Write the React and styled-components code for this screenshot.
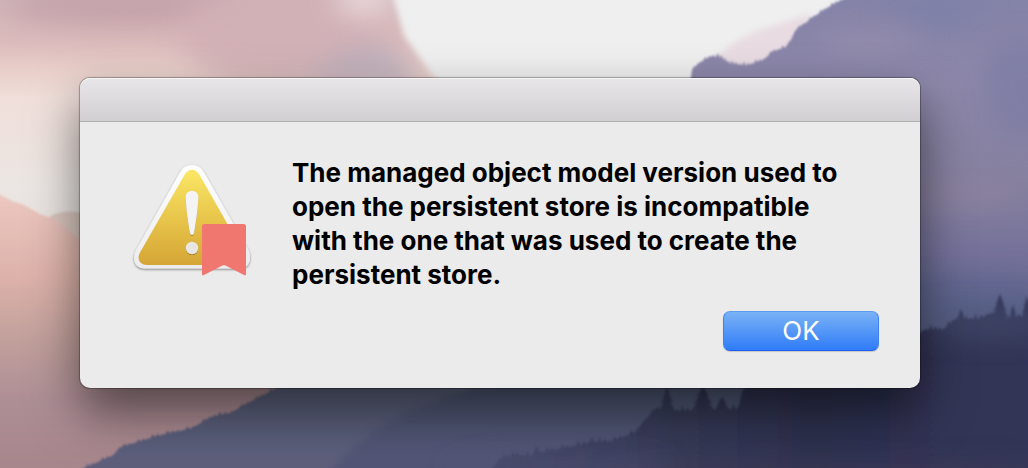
import React from 'react';
import styled, { createGlobalStyle } from 'styled-components';

const GlobalStyle = createGlobalStyle`
  * {
    box-sizing: border-box;
  }

  body {
    margin: 0;
    font-family: Inter, "Liberation Sans", sans-serif;
    background: #8d7f98;
  }
`;

const Desktop = styled.main`
  position: relative;
  min-height: 100vh;
  padding: 78px 108px 80px 80px;
  overflow: hidden;
`;

const WallpaperSvg = styled.svg`
  position: absolute;
  inset: 0;
  width: 100%;
  height: 100%;
`;

const Dialog = styled.section`
  position: relative;
  background: #ebebeb;
  border-radius: 10px;
  box-shadow:
    0 0 1px 1px rgba(0, 0, 0, 0.3),
    0 24px 50px rgba(0, 0, 0, 0.54);
`;

const TitleBar = styled.header`
  height: 44px;
  border-radius: 10px 10px 0 0;
  border-bottom: 1px solid #b1afb1;
  background: linear-gradient(#e8e6e8, #d1cfd1);
  box-shadow: inset 0 1px 0 #f6f5f6;
`;

const DialogBody = styled.div`
  display: flex;
  flex-direction: column;
  gap: 19px;
  padding: 34px 41px 37px 52px;
`;

const MessageRow = styled.div`
  display: flex;
  align-items: flex-start;
  gap: 40px;
`;

const AlertSvg = styled.svg`
  width: 120px;
  height: 120px;
  margin-top: 4px;
  flex-shrink: 0;
`;

const Message = styled.p`
  flex: 1;
  max-width: 568px;
  margin: 0;
  color: #000;
  font-size: 26px;
  font-weight: 700;
  line-height: 34px;
`;

const Actions = styled.div`
  display: flex;
  justify-content: flex-end;
`;

const PrimaryButton = styled.button`
  width: 156px;
  height: 40px;
  padding: 0;
  border: 1px solid;
  border-color: #5a9cee #3f83f3 #1f5ef0;
  border-radius: 7px;
  background: linear-gradient(#7ab2f5, #2f7cf8);
  box-shadow: 0 1px 1px rgba(0, 0, 0, 0.16);
  color: #fff;
  font-family: inherit;
  font-size: 26px;
  font-weight: 400;
  line-height: 38px;

  &:active {
    background: linear-gradient(#5d9bee, #1c66e0);
  }
`;

// Walks along the ridge and puts a small tree on it every few units.
const treeLine = (points, step, height) => {
  let d = `M${points[0][0]} 480 L${points[0].join(' ')}`;
  let n = 0;
  for (let i = 1; i < points.length; i++) {
    const [x0, y0] = points[i - 1];
    const [x1, y1] = points[i];
    const count = Math.max(1, Math.round((x1 - x0) / step));
    const w = (x1 - x0) / count;
    for (let k = 0; k < count; k++) {
      const x = x0 + w * k;
      const y = y0 + ((y1 - y0) * k) / count;
      const h = height * (0.3 + ((n * 7) % 10) / 12);
      d += ` L${(x + w * 0.5).toFixed(1)} ${(y - h).toFixed(1)} L${(x + w).toFixed(1)} ${(y + (y1 - y0) / count).toFixed(1)}`;
      n += 1;
    }
  }
  return `${d} L${points[points.length - 1][0]} 480 Z`;
};

const conifer = (x, y, w, h) => {
  const tiers = 5;
  let left = '';
  let right = '';
  for (let i = 1; i <= tiers; i++) {
    const ty = y + (h * i) / tiers;
    const half = (w / 2) * (i / tiers);
    right += ` L${x + half} ${ty} L${x + half * 0.5} ${ty - 2}`;
    left = ` L${x - half * 0.5} ${ty - 2} L${x - half} ${ty}${left}`;
  }
  return `M${x} ${y}${right} L${x + w / 2} 480 L${x - w / 2} 480${left} Z`;
};

const farRidge = [
  [689, 82], [692, 70], [699, 63], [711, 57], [720, 58], [730, 64], [746, 66],
  [762, 61], [772, 52], [785, 48], [797, 29], [812, 18], [826, 9], [842, 0], [870, -14], [1032, -14],
];

const middleRidge = [
  [80, 470], [110, 457], [122, 447], [155, 437], [190, 429], [212, 417],
  [228, 414], [250, 402], [268, 393], [290, 383], [340, 368], [560, 356], [780, 356],
];

const lowRidge = [
  [330, 470], [358, 444], [390, 422], [418, 410], [450, 398], [486, 386], [540, 372], [780, 360],
];

const shoreTrees = [
  [490, 470], [502, 458], [515, 456], [530, 458], [540, 453], [570, 448], [592, 443], [612, 442],
  [634, 434], [644, 420], [655, 410], [680, 412], [700, 412], [736, 410], [742, 392], [750, 380], [880, 350],
  [915, 338], [924, 331], [942, 330], [955, 320], [978, 320], [990, 314], [1006, 319], [1032, 316],
];

const firs = [
  [537, 446, 14, 16], [592, 437, 12, 14], [667, 386, 30, 44], [703, 384, 32, 34], [722, 397, 22, 18],
  [924, 329, 14, 20], [961, 309, 28, 34], [1000, 294, 24, 30], [1013, 305, 14, 22], [1027, 296, 18, 30],
];

const Wallpaper = () => (
  <WallpaperSvg viewBox="0 0 1028 468" preserveAspectRatio="xMidYMid slice" aria-hidden="true">
    <defs>
      <linearGradient id="sky" x1="0" y1="0" x2="0" y2="1">
        <stop offset="0" stopColor="#cfb3b8" />
        <stop offset="0.09" stopColor="#dcbcbc" />
        <stop offset="0.15" stopColor="#e9cfca" />
        <stop offset="0.21" stopColor="#f0dfda" />
        <stop offset="0.4" stopColor="#ebe6e3" />
        <stop offset="1" stopColor="#e0cfca" />
      </linearGradient>
      <linearGradient id="slope" x1="0" y1="190" x2="0" y2="468" gradientUnits="userSpaceOnUse">
        <stop offset="0" stopColor="#ecc9c1" />
        <stop offset="0.3" stopColor="#deb3ab" />
        <stop offset="0.55" stopColor="#c09f9b" />
        <stop offset="0.75" stopColor="#ae8f96" />
        <stop offset="1" stopColor="#a7868c" />
      </linearGradient>
      <linearGradient id="far" x1="0" y1="0" x2="0" y2="340" gradientUnits="userSpaceOnUse">
        <stop offset="0" stopColor="#8483a8" />
        <stop offset="0.25" stopColor="#8e88aa" />
        <stop offset="0.55" stopColor="#85809f" />
        <stop offset="0.75" stopColor="#74719a" />
        <stop offset="1" stopColor="#586085" />
      </linearGradient>
      <linearGradient id="middle" x1="0" y1="380" x2="0" y2="468" gradientUnits="userSpaceOnUse">
        <stop offset="0" stopColor="#626984" />
        <stop offset="0.6" stopColor="#5a5e7b" />
        <stop offset="1" stopColor="#5f5e7c" />
      </linearGradient>
      <linearGradient id="low" x1="0" y1="380" x2="0" y2="468" gradientUnits="userSpaceOnUse">
        <stop offset="0" stopColor="#505a76" />
        <stop offset="1" stopColor="#515375" />
      </linearGradient>
      <linearGradient id="shore" x1="490" y1="0" x2="1028" y2="0" gradientUnits="userSpaceOnUse">
        <stop offset="0" stopColor="#454766" />
        <stop offset="0.22" stopColor="#3d4160" />
        <stop offset="0.38" stopColor="#373a57" />
        <stop offset="0.6" stopColor="#2e3150" />
        <stop offset="1" stopColor="#333658" />
      </linearGradient>
      <filter id="haze" x="-50%" y="-150%" width="200%" height="400%">
        <feGaussianBlur stdDeviation="14" />
      </filter>
      <filter id="soft" x="-20%" y="-20%" width="140%" height="140%">
        <feGaussianBlur stdDeviation="3" />
      </filter>
      <filter id="edge">
        <feGaussianBlur stdDeviation="0.8" />
      </filter>
    </defs>

    <rect width="1028" height="468" fill="url(#sky)" />
    <ellipse cx="125" cy="8" rx="120" ry="18" fill="#bd99a2" opacity="0.7" filter="url(#haze)" />
    <ellipse cx="280" cy="35" rx="100" ry="50" fill="#d1b0b6" opacity="0.9" filter="url(#haze)" />
    <ellipse cx="365" cy="-4" rx="30" ry="20" fill="#ecdcdd" opacity="0.9" filter="url(#haze)" />
    <path d="M300 80 Q340 50 372 44 L396 48 L424 86 Z" fill="#b9abba" opacity="0.9" filter="url(#haze)" />
    <path d="M388 -20 L404 36 L436 80 L460 120 L760 120 L900 -20 Z" fill="#efefef" filter="url(#soft)" />
    <path d="M700 70 Q740 34 766 28 L810 14 L800 70 Z" fill="#e8d9e1" opacity="0.9" filter="url(#soft)" />

    <path d="M50 216 Q65 208 90 214 L140 480 L40 480 Z" fill="#dbc8c0" filter="url(#edge)" />
    <path d="M-5 192 L12 201 L24 205 L40 214 L54 219 L78 238 L110 270 L500 480 L-5 480 Z" fill="url(#slope)" filter="url(#edge)" />

    <path d={treeLine(farRidge, 4, 4)} fill="url(#far)" filter="url(#edge)" />
    <ellipse cx="935" cy="15" rx="50" ry="16" fill="#7a7fa9" opacity="0.6" filter="url(#haze)" />
    <ellipse cx="870" cy="42" rx="55" ry="14" fill="#9c92af" opacity="0.6" filter="url(#haze)" />
    <ellipse cx="1025" cy="90" rx="45" ry="50" fill="#7879a2" opacity="0.6" filter="url(#haze)" />
    <ellipse cx="965" cy="195" rx="60" ry="16" fill="#8f839e" opacity="0.6" filter="url(#haze)" />
    <ellipse cx="960" cy="300" rx="90" ry="24" fill="#57618a" opacity="0.5" filter="url(#haze)" />

    <path d={treeLine(middleRidge, 5, 4)} fill="url(#middle)" filter="url(#edge)" />
    <path d={treeLine(lowRidge, 10, 9)} fill="url(#low)" opacity="0.8" filter="url(#soft)" />
    <g fill="url(#shore)" filter="url(#edge)">
      <path d={treeLine(shoreTrees, 5, 6)} />
      {firs.map(([x, y, w, h]) => (
        <path key={x} d={conifer(x, y, w, h)} />
      ))}
    </g>
    <ellipse cx="990" cy="322" rx="70" ry="14" fill="#4a5374" opacity="0.6" filter="url(#haze)" />
    <ellipse cx="560" cy="470" rx="110" ry="10" fill="#555578" opacity="0.7" filter="url(#haze)" />
    <ellipse cx="860" cy="484" rx="260" ry="18" fill="#4b405c" opacity="0.5" filter="url(#haze)" />
  </WallpaperSvg>
);

const AlertIcon = () => (
  <AlertSvg viewBox="0 0 120 120" role="img" aria-label="Warning">
    <defs>
      <linearGradient id="rim" x1="0" y1="0" x2="0" y2="1">
        <stop offset="0" stopColor="#ffffff" />
        <stop offset="1" stopColor="#ececec" />
      </linearGradient>
      <linearGradient id="yellow" x1="0" y1="0" x2="0" y2="1">
        <stop offset="0" stopColor="#fbe765" />
        <stop offset="0.5" stopColor="#e8c64c" />
        <stop offset="1" stopColor="#d5a535" />
      </linearGradient>
      <filter id="drop" x="-10%" y="-10%" width="120%" height="120%">
        <feDropShadow dx="0" dy="1" stdDeviation="1" floodColor="#000" floodOpacity="0.5" />
      </filter>
      <filter id="markDrop" x="-40%" y="-20%" width="180%" height="150%">
        <feDropShadow dx="0" dy="1" stdDeviation="0.7" floodColor="#7a5c00" floodOpacity="0.6" />
      </filter>
    </defs>
    <path
      d="M50 9.500 Q54 5 60 5 Q66 5 70 9.500 L73 14 L116.500 90 Q118 93 118 97.500 Q118 108 107 108.500 L13 108.500 Q2 108 2 97.500 Q2 93 4 90 L47 14 Z"
      fill="url(#rim)"
      filter="url(#drop)"
    />
    <path
      d="M53 14 Q56 9.700 60 9.700 Q64 9.700 67 14 L112 93 Q113 95.500 113 98 Q112.500 104.500 105 105 L15 105 Q7 104.500 6.500 98 Q6.500 95.500 8 92.500 Z"
      fill="url(#yellow)"
    />
    <g fill="#f4f4f4" filter="url(#markDrop)">
      <path d="M53.700 38 C53.300 33.500 56 31 60 31 C64 31 66.700 33.500 66.400 38 C65.800 50 63.500 65 62 73 Q61.600 75 60 75 Q58.400 75 58 73 C56.500 65 54.200 50 53.700 38 Z" />
      <circle cx="60" cy="88" r="6.200" fill="#e8e6e2" />
    </g>
    <path
      d="M72.500 64 H111.500 Q114 64 114 66.500 V114 Q114 116 112 115 L94.500 106 Q92 104.500 89.500 106 L72 115 Q70 116 70 114 V66.500 Q70 64 72.500 64 Z"
      fill="#ef776f"
    />
  </AlertSvg>
);

const App = () => (
  <>
    <GlobalStyle />
    <Desktop>
      <Wallpaper />
      <Dialog role="alertdialog" aria-describedby="alert-message">
        <TitleBar />
        <DialogBody>
          <MessageRow>
            <AlertIcon />
            <Message id="alert-message">
              The managed object model version used to open the persistent store is incompatible with
              the one that was used to create the persistent store.
            </Message>
          </MessageRow>
          <Actions>
            <PrimaryButton type="button">OK</PrimaryButton>
          </Actions>
        </DialogBody>
      </Dialog>
    </Desktop>
  </>
);

export default App;
